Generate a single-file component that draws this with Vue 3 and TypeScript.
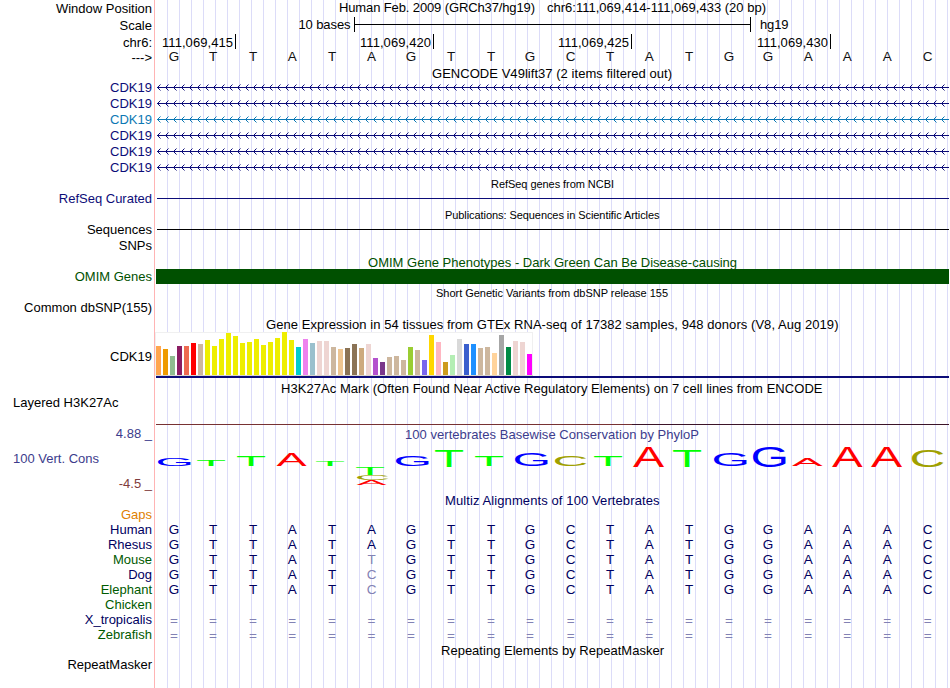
<script setup lang="ts">
interface Title { text: string; x: number; width: number; small?: boolean }
interface Base { letter: string; muted?: boolean }
interface Row {
  kind: string
  height: number
  label?: string
  tone?: string
  left?: boolean
  title?: Title
  bases?: Base[]
  baseTone?: string
}
interface LogoGlyph { letter: string; x: number; top: number; w: number; h: number }

const sequence = 'GTTATAGTTGCTATGGAAAC'
const toBases = (swap?: string): Base[] =>
  sequence.split('').map((letter, i) => (swap && i === 5 ? { letter: swap, muted: true } : { letter }))
const aligned = '='.repeat(20).split('').map((letter) => ({ letter, muted: true }))
const baseCenters = [174, 213, 253, 292.3, 332, 371.5, 411, 451, 491, 530, 570.7, 610, 649.3, 689, 729, 768, 808.3, 847.3, 887.3, 927.7]

const title = (height: number, text: string, x: number, right: number, tone = 'black', small = false): Row => ({
  kind: 'title', height, tone, title: { text, x, width: right - x, small },
})
const gene = (tone = 'navy'): Row => ({ kind: 'gene', height: 16, label: 'CDK19', tone })
const species = (label: string, tone: string, bases?: Base[], height = 15): Row => ({
  kind: 'bases', height, label, tone, bases, baseTone: 'seq',
})

const rows: Row[] = [
  { kind: 'header', height: 17, label: 'Window Position' },
  { kind: 'scale', height: 17, label: 'Scale' },
  { kind: 'ruler', height: 15, label: 'chr6:' },
  { kind: 'bases', height: 16, label: '--->', bases: toBases(), baseTone: 'dark' },
  title(14, 'GENCODE V49lift37 (2 items filtered out)', 432, 672),
  gene(), gene(), gene('blue'), gene(), gene(), gene(),
  title(15, 'RefSeq genes from NCBI', 491, 614, 'black', true),
  { kind: 'line', height: 16, label: 'RefSeq Curated', tone: 'navy' },
  title(15, 'Publications: Sequences in Scientific Articles', 445, 659.5, 'black', true),
  { kind: 'line', height: 16, label: 'Sequences', tone: 'black' },
  { kind: 'empty', height: 17, label: 'SNPs' },
  title(14, 'OMIM Gene Phenotypes - Dark Green Can Be Disease-causing', 368, 737, 'green'),
  { kind: 'block', height: 16, label: 'OMIM Genes', tone: 'green' },
  title(15, 'Short Genetic Variants from dbSNP release 155', 436, 668, 'black', true),
  { kind: 'empty', height: 17, label: 'Common dbSNP(155)' },
  title(15, 'Gene Expression in 54 tissues from GTEx RNA-seq of 17382 samples, 948 donors (V8, Aug 2019)', 266, 838.5),
  { kind: 'gtex', height: 49, label: 'CDK19' },
  title(14, 'H3K27Ac Mark (Often Found Near Active Regulatory Elements) on 7 cell lines from ENCODE', 281, 822.5),
  { kind: 'histone', height: 32, label: 'Layered H3K27Ac', left: true },
  { kind: 'cons', height: 66, label: '100 Vert. Cons', tone: 'indigo', left: true },
  title(14, 'Multiz Alignments of 100 Vertebrates', 445, 659.5, 'seq'),
  species('Gaps', 'orange'),
  species('Human', 'seq', toBases()),
  species('Rhesus', 'seq', toBases()),
  species('Mouse', 'leaf', toBases('T')),
  species('Dog', 'seq', toBases('C')),
  species('Elephant', 'leaf', toBases('C')),
  species('Chicken', 'leaf'),
  species('X_tropicalis', 'seq', aligned),
  species('Zebrafish', 'leaf', aligned, 16),
  title(14, 'Repeating Elements by RepeatMasker', 441, 664),
  { kind: 'empty', height: 31, label: 'RepeatMasker' },
]

// Strand chevrons, one pixel per step, every 8px along the intron line.
const steps = Array.from({ length: 99 }, (_, i) => 157 + i * 8)
const pixel = (x: number, y: number): string => `M${x} ${y}h1v1h-1z`
const arrowCore = steps.map((x) => pixel(x + 1, 6) + pixel(x + 1, 8) + pixel(x + 2, 5) + pixel(x + 2, 9)).join('')
const arrowEnds = steps.map((x) => pixel(x + 3, 4) + pixel(x + 3, 10)).join('')

const ticks = [
  { label: '111,069,415', x: 235 },
  { label: '111,069,420', x: 433 },
  { label: '111,069,425', x: 631 },
  { label: '111,069,430', x: 830 },
]

const heights = [29, 26, 19, 29, 29, 32, 31, 35, 29, 36, 42, 39, 32, 33, 36, 30, 33, 37, 43, 35, 28, 36, 32, 34, 34, 28, 26,
  27, 31, 27, 31, 17, 13, 18, 19, 15, 28, 25, 15, 40, 33, 13, 20, 36, 31, 31, 27, 28, 22, 40, 28, 34, 33, 21]
const colors = ['#ffa54f', '#ee9a00', '#8fbc8f', '#8b1c62', '#ee6a50', '#ff0000', '#cdb79e',
  ...Array<string>(13).fill('#eeee00'), '#00cdcd', '#ee82ee', '#9ac0cd', '#eed5d2', '#eed5d2', '#cdb79e', '#eec591',
  '#8b7355', '#8b7355', '#cdaa7d', '#eed5d2', '#b452cd', '#7a378b', '#cdb79e', '#cdb79e', '#cdb79e', '#9acd32',
  '#cdb79e', '#7a67ee', '#ffd700', '#ffb6c1', '#cd9b1d', '#b4eeb4', '#d9d9d9', '#3a5fcd', '#1e90ff', '#cdb79e',
  '#cdb79e', '#ffd39b', '#a6a6a6', '#008b45', '#eed5d2', '#eed5d2', '#ff00ff']
const bars = heights.map((h, i) => ({ x: 156 + i * 7, y: 43 - h, h, fill: colors[i] }))

const g = (letter: string, x: number, right: number, top: number, bottom: number): LogoGlyph => ({
  letter, x, top: top - 427, w: right - x, h: bottom - top,
})
const logo: LogoGlyph[] = [
  g('G', 158, 191, 458, 466), g('T', 197, 225, 460, 466), g('T', 237, 265, 456, 466), g('A', 276.5, 306.5, 454, 466),
  g('T', 316, 344, 461, 466), g('T', 356, 384, 467, 475), g('C', 357, 388, 475, 480), g('A', 356.5, 386.5, 480, 485),
  g('G', 396, 429, 456, 466), g('T', 435, 463, 450, 467), g('T', 475, 503, 456, 466), g('G', 515, 548, 453, 466),
  g('C', 555, 586, 456, 466), g('T', 594, 622, 456, 466), g('A', 633, 664, 447, 467), g('T', 673, 701, 450, 467),
  g('G', 714, 747, 453, 466), g('G', 753, 786, 446, 467), g('A', 792, 822.5, 458, 466), g('A', 832, 862.5, 447, 467),
  g('A', 871, 902, 447, 467), g('C', 912, 943, 450, 467),
]
const extents: Record<string, [number, number, number, number]> = {
  A: [0.04, 13.62, 0, 14.09],
  C: [1.02, 13.84, -0.2, 14.3],
  G: [1.03, 14.66, -0.2, 14.3],
  T: [0.46, 12.06, 0, 14.09],
}
function logoTransform(l: LogoGlyph): string {
  const [x0, x1, y0, y1] = extents[l.letter]
  const sx = l.w / (x1 - x0)
  const sy = l.h / (y1 - y0)
  return `translate(${l.x - x0 * sx} ${l.top + y1 * sy}) scale(${sx} ${sy})`
}
</script>

<template>
  <main class="browser">
    <div v-for="(row, r) in rows" :key="r" class="row" :style="{ height: row.height + 'px' }">
      <div class="label" :class="[row.tone, row.kind, { left: row.left }]">
        <template v-if="row.kind === 'cons'">
          <span class="limit">4.88 _</span>
          <span class="name">{{ row.label }}</span>
          <span class="limit low">-4.5 _</span>
        </template>
        <span v-else-if="row.kind !== 'title'">{{ row.label }}</span>
      </div>
      <svg class="track" width="795" :height="row.height" :viewBox="`155 0 795 ${row.height}`">
        <text
          v-if="row.title"
          :class="[row.tone, { small: row.title.small }]"
          :x="row.title.x" y="12" :textLength="row.title.width"
        >{{ row.title.text }}</text>

        <template v-if="row.kind === 'header'">
          <text x="339" y="11" textLength="196">Human Feb. 2009 (GRCh37/hg19)</text>
          <text x="547" y="11" textLength="219">chr6:111,069,414-111,069,433 (20 bp)</text>
        </template>

        <template v-else-if="row.kind === 'scale'">
          <text x="298.5" y="11" textLength="52">10 bases</text>
          <path class="rule black" d="M354 6h397v1h-397zM354-1h1v15h-1zM750-1h1v15h-1z" />
          <text x="760" y="11" textLength="28.5">hg19</text>
        </template>

        <template v-else-if="row.kind === 'ruler'">
          <template v-for="t in ticks" :key="t.x">
            <text :x="t.x - 73" y="12" textLength="71">{{ t.label }}</text>
            <rect class="rule black" :x="t.x" y="-1" width="1" height="15" />
          </template>
        </template>

        <g v-else-if="row.kind === 'bases'" class="letters" :class="row.baseTone">
          <text
            v-for="(b, i) in row.bases" :key="i" :class="{ muted: b.muted }"
            :x="baseCenters[i]" :y="b.letter === '=' ? 13 : row.baseTone === 'dark' ? 11 : 12"
          >{{ b.letter }}</text>
        </g>

        <g v-else-if="row.kind === 'gene'" :class="row.tone">
          <rect class="rule" x="157" y="7" width="792" height="1" />
          <path class="rule" :d="arrowCore" />
          <path class="rule faint" :d="arrowEnds" />
        </g>

        <rect v-else-if="row.kind === 'line'" class="rule" :class="row.tone" x="157" y="7" width="792" height="1" />
        <rect v-else-if="row.kind === 'block'" class="rule omim" x="156" y="0" width="793" height="15" />

        <template v-else-if="row.kind === 'gtex'">
          <rect class="panel" x="155.5" y="0.5" width="377" height="43" />
          <rect class="floor" x="156" y="43" width="377" height="1" />
          <rect v-for="b in bars" :key="b.x" :x="b.x" :y="b.y" width="5" :height="b.h" :fill="b.fill" />
          <rect class="rule navy" x="156" y="44" width="793" height="2" />
        </template>

        <template v-else-if="row.kind === 'histone'">
          <rect class="brown" x="156" y="29" width="476" height="1" />
          <rect class="umber" x="632" y="29" width="317" height="1" />
        </template>

        <template v-else-if="row.kind === 'cons'">
          <text class="indigo" x="405" y="12" textLength="294">100 vertebrates Basewise Conservation by PhyloP</text>
          <text
            v-for="(l, i) in logo" :key="i" class="logo" :class="'nt-' + l.letter"
            :transform="logoTransform(l)"
          >{{ l.letter }}</text>
        </template>
      </svg>
    </div>
  </main>
</template>

<style>
body {
  margin: 0;
  background: #fff;
}
</style>

<style scoped>
.browser {
  box-sizing: border-box;
  width: 950px;
  height: 688px;
  padding-top: 1px;
  overflow: hidden;
  font: 13px/15px "Liberation Sans", Arial, sans-serif;
  color: #000;
  background:
    linear-gradient(#ffb4b4, #ffb4b4) 154px 0 / 1px 100% no-repeat,
    repeating-linear-gradient(90deg, #dcdcf8 0 1px, transparent 1px 12px) 167px 0 / 783px 100% no-repeat,
    #fff;
}
.row {
  display: grid;
  grid-template-columns: 155px 795px;
}
.label {
  display: flex;
  justify-content: flex-end;
  padding-right: 3px;
  white-space: pre;
}
.label.left {
  justify-content: flex-start;
  padding-left: 13px;
}
.label.gtex {
  padding-top: 17px;
}
.label.cons {
  flex-direction: column;
  gap: 10px;
  margin-top: -1px;
}
.limit {
  align-self: flex-end;
}
.low {
  color: #803c3c;
}
.track {
  display: block;
  overflow: visible;
}
text {
  white-space: pre;
  fill: currentColor;
}
.small {
  font-size: 11px;
}
.letters text {
  font-size: 13.5px;
  text-anchor: middle;
}
.rule {
  fill: currentColor;
}
.faint {
  opacity: 0.5;
}
.black { color: #000; }
.dark { color: #111; }
.navy { color: #0c0c78; }
.blue { color: #0c78b4; }
.green { color: #005000; }
.seq { color: #00005f; }
.leaf { color: #005a00; }
.orange { color: #e08000; }
.indigo { color: #3c3c8c; }
.omim { color: #005000; }
.letters .muted { color: #8282b4; }
.panel {
  fill: #fff;
  stroke: #f0f0f0;
}
.floor { fill: #d8d4cc; }
.brown { fill: #783232; }
.umber { fill: #3c1428; }
.logo { font-size: 20.48px; }
.nt-A { color: #f00; }
.nt-C { color: #a0a000; }
.nt-G { color: #00f; }
.nt-T { color: #0f0; }
</style>
